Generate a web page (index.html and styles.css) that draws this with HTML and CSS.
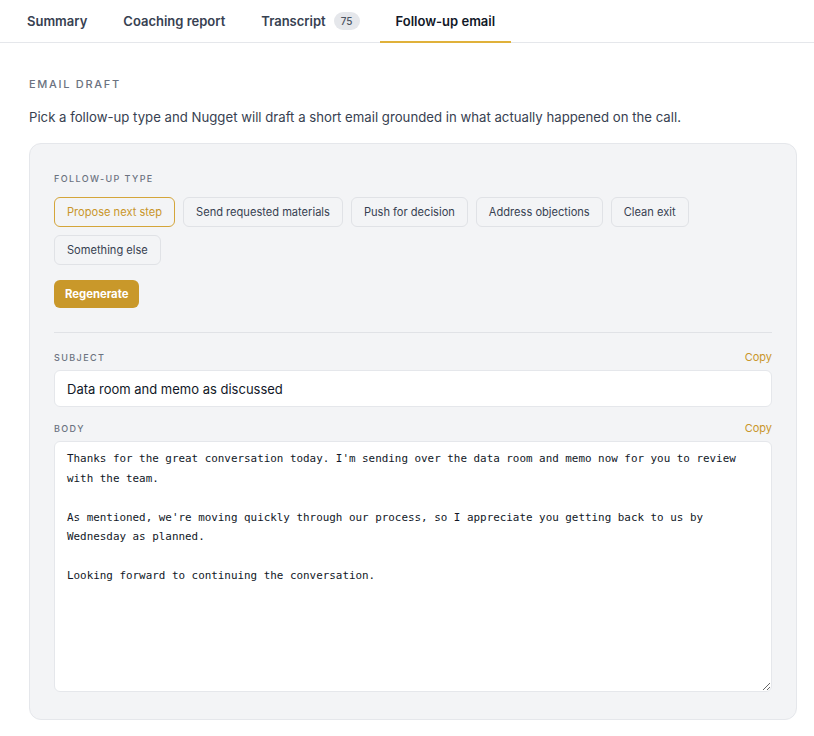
FILE: index.html
```html
<!DOCTYPE html>
<html lang="en">
<head>
    <meta charset="UTF-8">
    <meta name="viewport" content="width=device-width, initial-scale=1.0">
    <title>Follow-up email</title>
    <link rel="stylesheet" href="styles.css">
</head>
<body>

    <nav class="tabs">
        <a class="tab">Summary</a>
        <a class="tab">Coaching report</a>
        <a class="tab">Transcript <span class="badge">75</span></a>
        <a class="tab active">Follow-up email</a>
    </nav>

    <main class="page">
        <h2 class="eyebrow">Email draft</h2>
        <p class="intro">Pick a follow-up type and Nugget will draft a short email grounded in what actually happened on the call.</p>

        <section class="card">
            <div class="label">Follow-up type</div>
            <div class="chips">
                <button class="chip selected">Propose next step</button>
                <button class="chip">Send requested materials</button>
                <button class="chip">Push for decision</button>
                <button class="chip">Address objections</button>
                <button class="chip">Clean exit</button>
                <button class="chip">Something else</button>
            </div>
            <button class="regen">Regenerate</button>

            <hr class="divider">

            <div class="field-head">
                <span class="label">Subject</span>
                <a class="copy">Copy</a>
            </div>
            <input class="subject" type="text" value="Data room and memo as discussed">

            <div class="field-head">
                <span class="label">Body</span>
                <a class="copy">Copy</a>
            </div>
            <textarea class="body-text">Thanks for the great conversation today. I'm sending over the data room and memo now for you to review with the team.

As mentioned, we're moving quickly through our process, so I appreciate you getting back to us by Wednesday as planned.

Looking forward to continuing the conversation.</textarea>
        </section>
    </main>

</body>
</html>
```

FILE: styles.css
```css
body {
    font-family: 'Inter', 'Noto Sans', sans-serif;
    background-color: #fff;
    color: #1f2937;
    margin: 0;
    padding: 0;
}

.tabs {
    display: flex;
    padding-left: 11px;
    gap: 4px;
    border-bottom: 1px solid #e5e7eb;
    height: 42px;
}

.tab {
    display: flex;
    align-items: center;
    gap: 8px;
    padding: 0 16px;
    font-size: 13px;
    font-weight: 600;
    color: #374151;
    border-bottom: 2px solid transparent;
    margin-bottom: -1px;
}

.tab.active {
    color: #111827;
    border-bottom-color: #e0b13a;
}

.badge {
    background-color: #e5e7eb;
    color: #4b5563;
    font-size: 10px;
    font-weight: 500;
    border-radius: 10px;
    padding: 3px 7px;
}

.page {
    padding: 0 17px 0 29px;
}

.eyebrow {
    font-size: 11px;
    font-weight: 500;
    letter-spacing: 1.7px;
    text-transform: uppercase;
    color: #6b7280;
    margin: 34px 0 0;
}

.intro {
    font-size: 13.2px;
    color: #374151;
    margin: 18px 0 18px;
}

.card {
    background-color: #f3f4f6;
    border: 1px solid #e5e7eb;
    border-radius: 12px;
    padding: 29px 24px 27px;
}

.label {
    font-size: 9px;
    font-weight: 500;
    letter-spacing: 1.4px;
    text-transform: uppercase;
    color: #6b7280;
}

.chips {
    display: flex;
    flex-wrap: wrap;
    gap: 8px;
    margin-top: 13px;
}

.chip {
    font-family: inherit;
    font-size: 11.1px;
    color: #374151;
    background-color: #f3f4f6;
    border: 1px solid #e0e2e6;
    border-radius: 6px;
    height: 30px;
    padding: 0 12px;
}

.chip.selected {
    color: #c9962a;
    border-color: #d4a53a;
}

.regen {
    font-family: inherit;
    font-size: 11.3px;
    font-weight: 700;
    color: #fff;
    background-color: #c9982a;
    border: none;
    border-radius: 6px;
    height: 28px;
    padding: 0 11px;
    margin-top: 15px;
}

.divider {
    border: none;
    border-top: 1px solid #e0e2e6;
    margin: 24px 0 17px;
}

.field-head {
    display: flex;
    justify-content: space-between;
    align-items: center;
    margin-bottom: 6px;
}

.copy {
    font-size: 11px;
    color: #c9962a;
}

.subject {
    display: block;
    box-sizing: border-box;
    width: 100%;
    height: 37px;
    font-family: inherit;
    font-size: 13px;
    color: #111827;
    background-color: #fff;
    border: 1px solid #e5e7eb;
    border-radius: 6px;
    padding: 0 12px;
    margin-bottom: 14px;
}

.body-text {
    display: block;
    box-sizing: border-box;
    width: 100%;
    height: 251px;
    font-family: 'DejaVu Sans Mono', monospace;
    font-size: 10.9px;
    line-height: 19.5px;
    color: #111827;
    background-color: #fff;
    border: 1px solid #e5e7eb;
    border-radius: 6px;
    padding: 7px 12px;
}
```
